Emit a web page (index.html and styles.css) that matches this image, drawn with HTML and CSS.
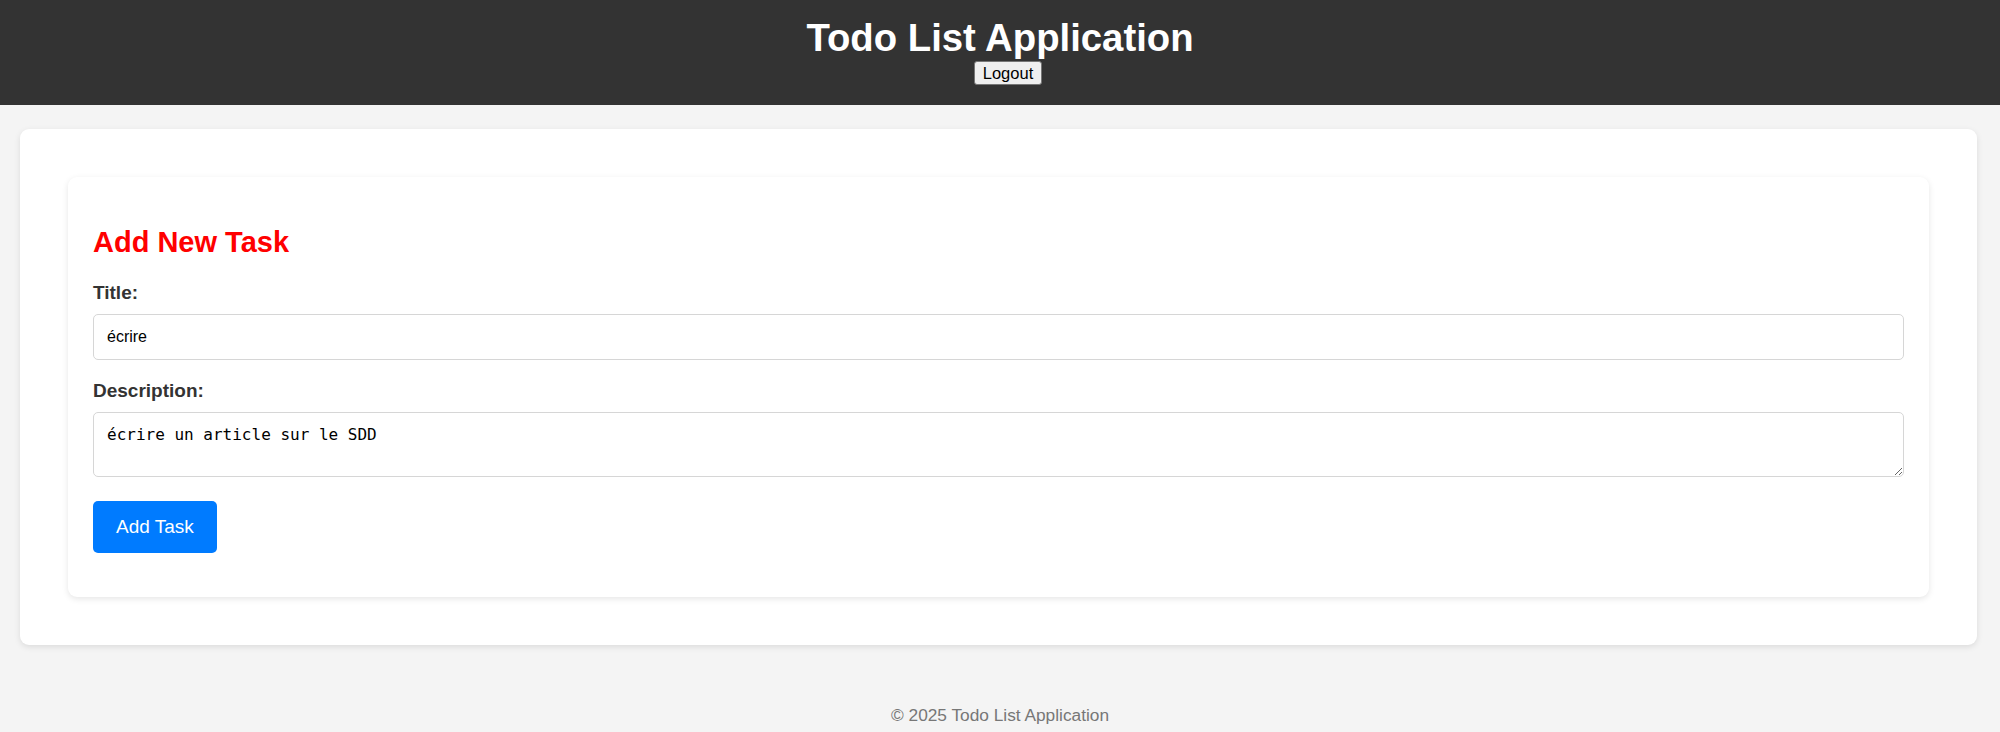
FILE: index.html
```html
<!DOCTYPE html>
<html lang="fr">
<head>
<meta charset="utf-8">
<title>Todo List Application</title>
<link rel="stylesheet" href="styles.css">
</head>
<body>
<header class="app-header">
  <h1 class="app-title">Todo List Application</h1>
  <button class="logout-btn" type="button">Logout</button>
</header>
<main class="container">
  <section class="task-card">
    <h2 class="task-heading">Add New Task</h2>
    <form class="task-form">
      <div class="form-group">
        <label class="form-label" for="title">Title:</label>
        <input class="form-input" id="title" type="text" value="écrire">
      </div>
      <div class="form-group">
        <label class="form-label" for="desc">Description:</label>
        <textarea class="form-textarea" id="desc">écrire un article sur le SDD</textarea>
      </div>
      <button class="submit-btn" type="button">Add Task</button>
    </form>
  </section>
</main>
<footer class="app-footer">© 2025 Todo List Application</footer>
</body>
</html>
```
FILE: styles.css
```css
* { box-sizing: border-box; }
html, body { margin: 0; padding: 0; }
body {
  background: #f4f4f4;
  font-family: "Liberation Sans", Arial, sans-serif;
  color: #333;
}
.app-header {
  background: #333;
  color: #fff;
  padding: 16px 0 20px;
  display: flex;
  flex-direction: column;
  align-items: center;
}
.app-title {
  margin: 0;
  font-size: 38.3px;
  line-height: 44px;
  font-weight: bold;
}
.logout-btn {
  margin: 1px 0 0 16px;
  height: 24px;
  padding: 0 8px;
  font-family: "Liberation Sans", Arial, sans-serif;
  font-size: 16.5px;
  color: #000;
  background: #efefef;
  border: 1px solid #767676;
  border-radius: 3px;
}
.container {
  margin: 24px 23px 0 20px;
  padding: 48px;
  background: #fff;
  border-radius: 9px;
  box-shadow: 0 2px 6px rgba(0,0,0,0.1);
}
.task-card {
  padding: 25px 25px 25px;
  background: #fff;
  border-radius: 9px;
  box-shadow: 0 2px 6px rgba(0,0,0,0.1);
}
.task-heading {
  margin: 24px 0 24px;
  font-size: 29px;
  line-height: 32px;
  color: #ff0000;
}
.task-form { display: flex; flex-direction: column; align-items: flex-start; }
.form-group { width: 100%; margin-bottom: 20px; }
.form-group + .form-group { margin-bottom: 24px; }
.form-label {
  display: block;
  margin-bottom: 11px;
  font-size: 19px;
  line-height: 21px;
  font-weight: bold;
  color: #333;
}
.form-input {
  display: block;
  width: 100%;
  height: 46px;
  padding: 0 13px;
  border: 1px solid #d6d6d6;
  border-radius: 5px;
  font-family: "Liberation Sans", Arial, sans-serif;
  font-size: 16px;
  color: #000;
  background: #fff;
}
.form-textarea {
  display: block;
  width: 100%;
  height: 65px;
  padding: 12px 13px;
  border: 1px solid #d6d6d6;
  border-radius: 5px;
  font-family: "DejaVu Sans Mono", "Liberation Mono", monospace;
  font-size: 16px;
  line-height: 19px;
  color: #000;
  background: #fff;
}
.submit-btn {
  height: 52px;
  padding: 0 23px;
  margin-bottom: 19px;
  background: #007bff;
  color: #fff;
  border: none;
  border-radius: 5px;
  font-family: "Liberation Sans", Arial, sans-serif;
  font-size: 19px;
}
.app-footer {
  margin-top: 60px;
  text-align: center;
  font-size: 17.3px;
  line-height: 20px;
  color: #777;
}
```
